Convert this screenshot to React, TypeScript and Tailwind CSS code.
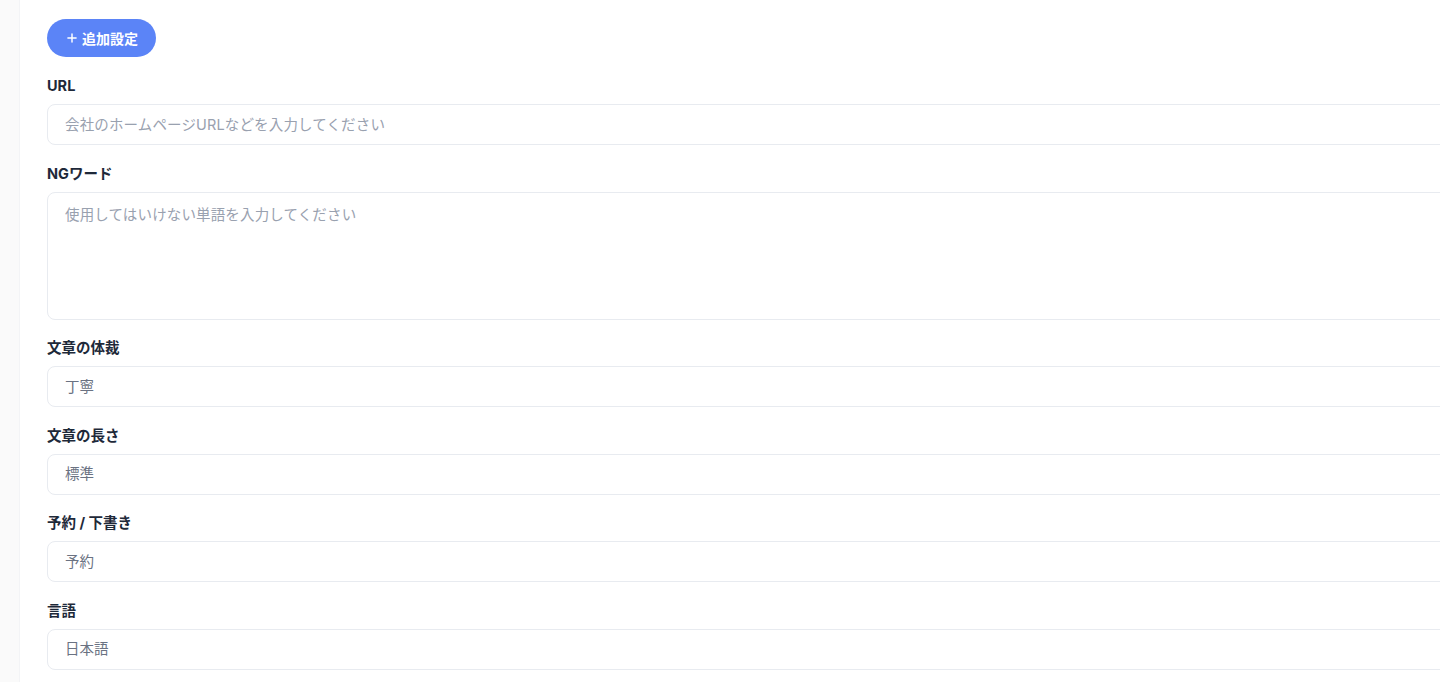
import { Plus } from 'lucide-react';

const FONT = { fontFamily: 'Inter, "Noto Sans CJK JP", sans-serif' };

export default function App() {
  return (
    <div className="flex h-[682px] w-screen overflow-hidden bg-white text-gray-800" style={FONT}>
      <div className="w-[20px] shrink-0 border-r border-gray-100 bg-[#fafafa]" />
      <div className="min-w-0 flex-1 overflow-hidden pl-[27px] pt-[19px]">
        <button className="flex h-[38px] w-[109px] items-center justify-center gap-[3px] rounded-full bg-[#5b84f7] text-[14px] font-bold text-white">
          <Plus size={14} strokeWidth={2.5} />
          追加設定
        </button>

        <div className="mt-[19px] flex w-[1420px] flex-col gap-[18.5px]">
          <Field label="URL">
            <input
              placeholder="会社のホームページURLなどを入力してください"
              className="h-[41px] w-full rounded-lg border border-[#e8ebf0] px-[17px] text-[14.5px] tracking-[0.01em] outline-none placeholder:text-gray-400"
            />
          </Field>

          <Field label="NGワード">
            <textarea
              placeholder="使用してはいけない単語を入力してください"
              className="block h-[128px] w-full resize-none rounded-lg border border-[#e8ebf0] px-[17px] py-[11px] text-[14.5px] tracking-[0.01em] outline-none placeholder:text-gray-400"
            />
          </Field>

          <Field label="文章の体裁">
            <SelectBox value="丁寧" />
          </Field>

          <Field label="文章の長さ">
            <SelectBox value="標準" />
          </Field>

          <Field label="予約 / 下書き">
            <SelectBox value="予約" />
          </Field>

          <Field label="言語">
            <SelectBox value="日本語" />
          </Field>
        </div>
      </div>
    </div>
  );
}

function Field({ label, children }: { label: string; children: React.ReactNode }) {
  return (
    <div>
      <p className="mb-2 text-[14.5px] font-bold leading-5 text-gray-800">{label}</p>
      {children}
    </div>
  );
}

function SelectBox({ value }: { value: string }) {
  return (
    <div className="flex h-[41px] w-full items-center rounded-lg border border-[#e8ebf0] px-[17px] text-[14.5px] text-gray-500">
      {value}
    </div>
  );
}
